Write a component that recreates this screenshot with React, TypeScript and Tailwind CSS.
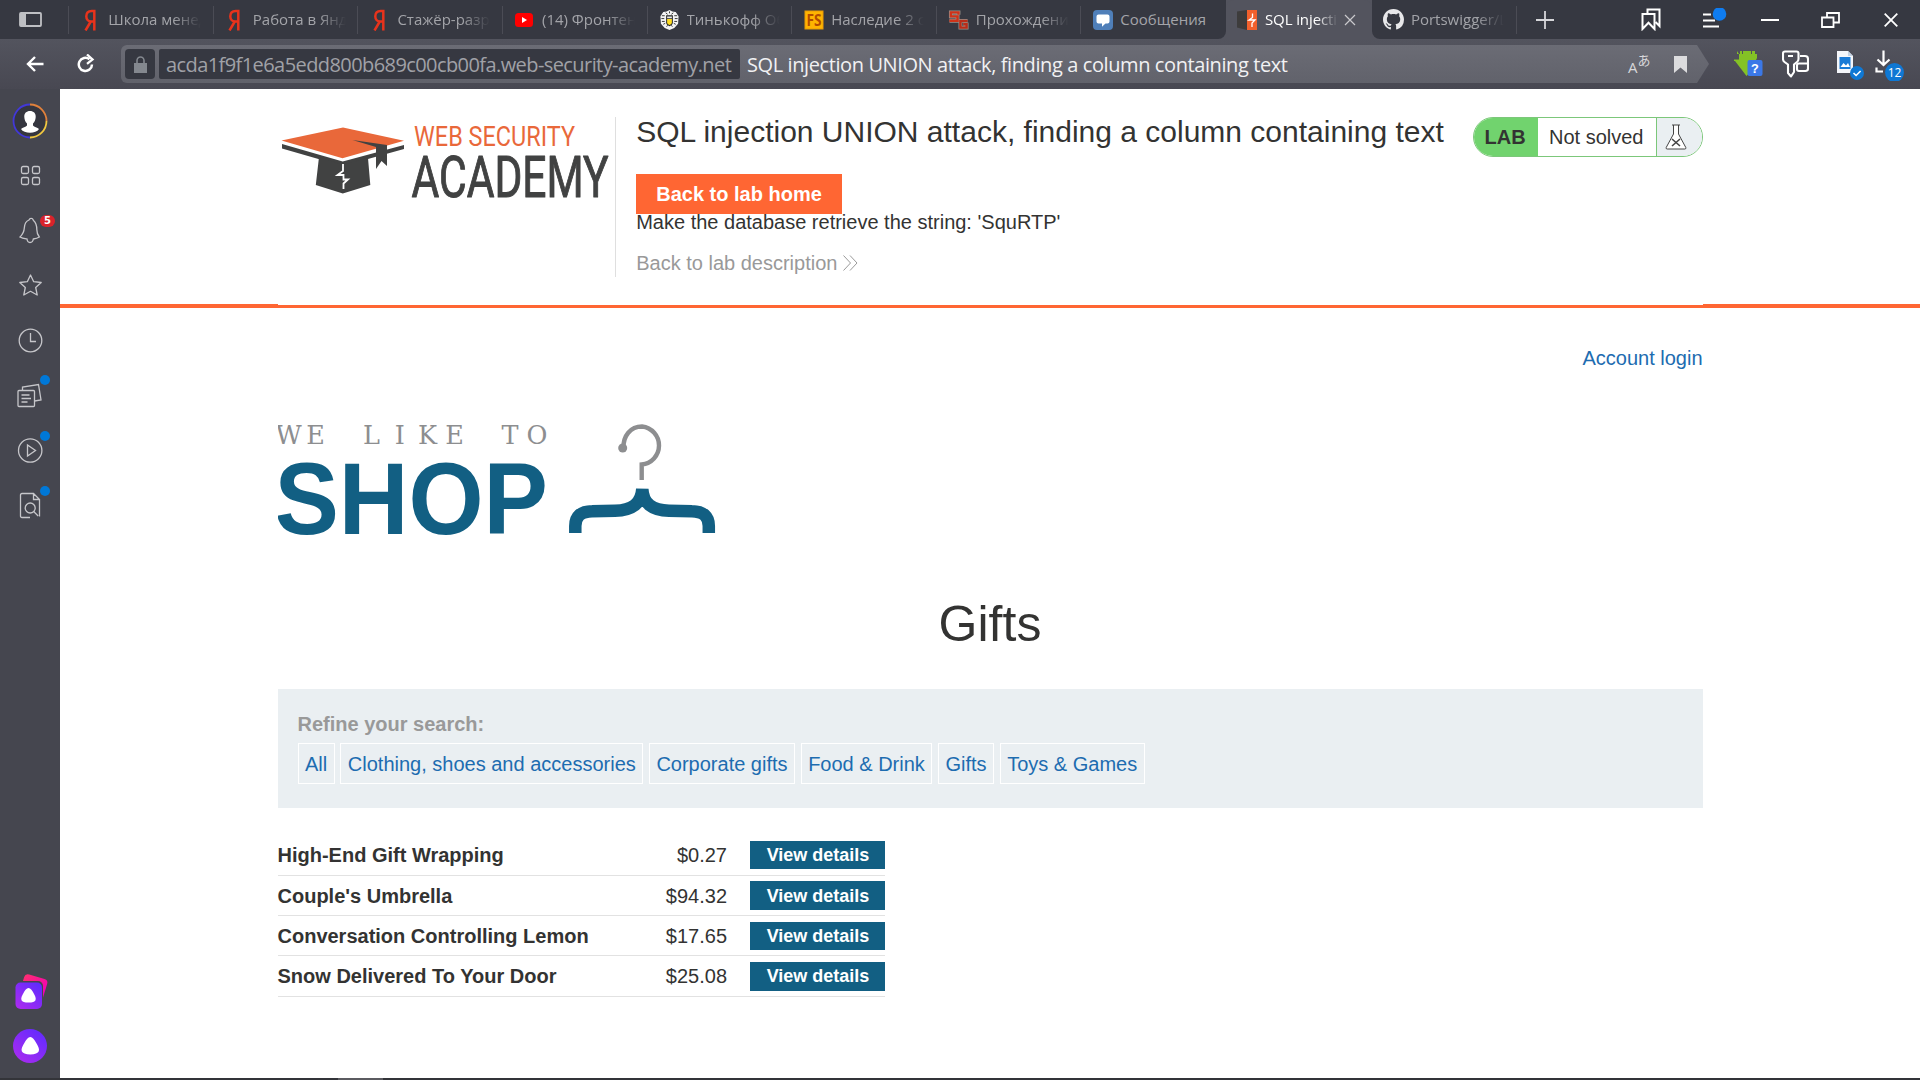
import type { ReactNode } from "react";

const UI = "font-['Open_Sans','Noto_Sans',sans-serif]";

function Ya() {
  return (
    <svg width="20" height="22" viewBox="0 0 20 22" fill="none" stroke="#e8331c" strokeWidth="2.5">
      <path d="M13.300 21.500V1.900h-2.6C7.200 1.900 5.300 4.100 5.300 7.200c0 3 1.800 5.200 4.800 5.200h3M10.100 12 4.500 21.500" />
    </svg>
  );
}

function YouTube() {
  return (
    <svg width="20" height="22" viewBox="0 0 20 22">
      <rect x="1" y="4" width="18" height="14" rx="3.500" fill="#f00" />
      <path d="M8 8v6l5-3z" fill="#fff" />
    </svg>
  );
}

function Crest() {
  return (
    <svg width="22" height="22" viewBox="0 0 22 22">
      <path d="M4.500 2.500 8 2l3-1.500L14 2l3.500.5 3 4.500-.5 8-4 4.500-5 2-5-2-4-4.500L1.500 7z" fill="#f4f4f4" />
      <path d="M3 6.500h3M2.500 9.500h3M3 12.500h3M4.500 15.500l2-1M19 6.500h-3M19.500 9.500h-3M19 12.500h-3M17.500 15.500l-2-1M7 3.500l2 1.500M15 3.500l-2 1.500M11 2v2M8 18l1-1.500M14 18l-1-1.500" stroke="#333" strokeWidth="1" />
      <path d="M7.500 6h7v8c0 1.600-1.500 2.600-3.500 3.500-2-.9-3.500-1.900-3.500-3.500z" fill="#222" />
      <path d="M8.500 10h5v3.500c0 1.200-1 2-2.500 2.700-1.500-.7-2.500-1.500-2.500-2.700z" fill="#fd2" />
      <path d="M8.500 7.300h5v1.900h-5z" fill="#e8e8e8" />
    </svg>
  );
}

function FS() {
  return (
    <svg width="20" height="22" viewBox="0 0 20 22">
      <rect x=".5" y="1.500" width="19" height="19" fill="#e89a06" />
      <rect x="1.500" y="2.500" width="17" height="17" fill="#ffb400" />
      <text x="10" y="16.500" textAnchor="middle" fontSize="15.500" fontWeight="700" textLength="15" lengthAdjust="spacingAndGlyphs" fill="#b34a00" fontFamily="Open Sans, sans-serif">FS</text>
    </svg>
  );
}

function SG() {
  return (
    <svg width="22" height="22" viewBox="0 0 22 22" fill="none">
      <path d="M11 5.500V3H3v4.200h7v4.600H1.500" stroke="#9a938c" strokeWidth="4" />
      <path d="M20.500 12h-7.500v7h6.500v-3.500h-3.500" stroke="#9a938c" strokeWidth="4" />
      <path d="M11 5.500V3H3v4.200h7v4.600H1.500" stroke="#cf3319" strokeWidth="2.500" />
      <path d="M20.500 12h-7.500v7h6.500v-3.500h-3.500" stroke="#b92c18" strokeWidth="2.500" />
    </svg>
  );
}

function Messages() {
  return (
    <svg width="20" height="22" viewBox="0 0 20 22">
      <rect x="0" y="1" width="20" height="20" rx="4" fill="#4f7fb9" />
      <path d="M5.500 5.500h9a2 2 0 0 1 2 2v5a2 2 0 0 1-2 2h-2L9 17.800v-3.300H5.500a2 2 0 0 1-2-2v-5a2 2 0 0 1 2-2z" fill="#fff" />
    </svg>
  );
}

function Burp() {
  return (
    <svg width="20" height="22" viewBox="0 0 20 22">
      <path d="M0 2.500 10 1v20L0 18.500z" fill="#3d3c3c" />
      <path d="M10 1h10v20H10z" fill="#f2602c" />
      <path d="M15.500 4.500v4L12 11h6l-3 3v4" stroke="#fff" strokeWidth="1.300" fill="none" />
    </svg>
  );
}

function GitHub() {
  return (
    <svg width="21" height="21" viewBox="0 0 16 16" fill="#e8e8ea">
      <path d="M8 0C3.580 0 0 3.580 0 8c0 3.540 2.290 6.530 5.470 7.590.4.070.550-.170.550-.380 0-.190-.010-.820-.010-1.490-2.010.370-2.530-.490-2.690-.940-.090-.230-.480-.940-.820-1.130-.280-.150-.680-.520-.010-.530.630-.010 1.080.580 1.230.820.720 1.210 1.870.870 2.330.660.070-.520.280-.870.510-1.070-1.780-.2-3.640-.890-3.640-3.950 0-.870.310-1.590.820-2.150-.080-.2-.360-1.020.080-2.120 0 0 .670-.210 2.200.820.640-.180 1.320-.270 2-.270s1.360.090 2 .270c1.530-1.040 2.200-.820 2.200-.820.440 1.100.160 1.920.080 2.120.510.560.820 1.270.820 2.150 0 3.070-1.870 3.750-3.650 3.950.290.250.540.730.540 1.480 0 1.070-.010 1.930-.010 2.200 0 .210.150.460.550.380A8.010 8.010 0 0 0 16 8c0-4.420-3.580-8-8-8z" />
    </svg>
  );
}

type TabData = { icon: ReactNode; title: string; active?: boolean; fit?: boolean };

const TABS: TabData[] = [
  { icon: <Ya />, title: "Школа менед" },
  { icon: <Ya />, title: "Работа в Янде" },
  { icon: <Ya />, title: "Стажёр-разра" },
  { icon: <YouTube />, title: "(14) Фронтен" },
  { icon: <Crest />, title: "Тинькофф Об" },
  { icon: <FS />, title: "Наследие 2 се" },
  { icon: <SG />, title: "Прохождени" },
  { icon: <Messages />, title: "Сообщения", fit: true },
  { icon: <Burp />, title: "SQL injectio", active: true },
  { icon: <GitHub />, title: "Portswigger/L" },
];

const FADE = "[mask-image:linear-gradient(to_right,#000_70%,transparent_100%)]";

function Tab({ t, last, beforeActive }: { t: TabData; last: boolean; beforeActive: boolean }) {
  if (t.active) {
    return (
      <div className="flex h-full w-[146px] items-center rounded-t-lg bg-[#53545e] pl-[11px]">
        <div className="flex w-[21px] justify-center">{t.icon}</div>
        <div className={`ml-[7px] w-[73px] overflow-hidden whitespace-nowrap text-[15px] tracking-[-0.1px] text-white ${FADE}`}>{t.title}</div>
        <svg className="ml-[6px]" width="12" height="12" viewBox="0 0 12 12" stroke="#c9c9cd" strokeWidth="1.200"><path d="M1 1l10 10M11 1 1 11" /></svg>
      </div>
    );
  }
  return (
    <div className={`flex h-full w-[144.600px] items-center bg-[#363841] ${beforeActive ? "rounded-br-lg" : ""} ${last ? "rounded-bl-lg" : ""}`}>
      <div className={`flex h-7 w-full items-center border-r pl-[11px] ${beforeActive ? "border-transparent" : "border-[#4b4c55]"}`}>
        <div className="flex w-[21px] justify-center">{t.icon}</div>
        <div className={`ml-[7px] w-[93px] overflow-hidden whitespace-nowrap text-[15px] text-[#a3a4a9] ${t.fit ? "" : FADE}`}>{t.title}</div>
      </div>
    </div>
  );
}

function TabBar() {
  return (
    <div className="flex h-[39px] items-center bg-[#53545e]">
      <div className="flex h-full w-[69.200px] items-center bg-[#363841]">
        <div className="flex h-7 w-full items-center border-r border-[#4b4c55] pl-[19px]">
          <svg width="23" height="15" viewBox="0 0 23 15"><rect x="1" y="1" width="21" height="13" rx="1" fill="none" stroke="#bfc0c4" strokeWidth="1.800" /><path d="M1 1h6v13H1z" fill="#bfc0c4" /></svg>
        </div>
      </div>
      {TABS.map((t, i) => (
        <Tab key={i} t={t} last={i === 9} beforeActive={i === 7} />
      ))}
      <div className="flex h-full flex-1 items-center bg-[#363841] text-white">
        <svg className="ml-[19px]" width="18" height="18" viewBox="0 0 18 18" stroke="#d6d6da" strokeWidth="1.800"><path d="M9 0v18M0 9h18" /></svg>
        <svg className="ml-[87px]" width="20" height="23" viewBox="0 0 20 23" fill="none" stroke="#fff" strokeWidth="2">
          <path d="M6.500 5V1.500h12V18l-4-4" /><path d="M1.500 6h12v15l-6-6.200-6 6.200z" />
        </svg>
        <svg className="ml-[40px]" width="26" height="24" viewBox="0 0 26 24" stroke="#fff" strokeWidth="2">
          <path d="M2 6.500h8M2 12.500h12M2 18.500h16" /><circle cx="18.500" cy="6" r="6.800" fill="#0f7cf0" stroke="none" />
        </svg>
        <svg className="ml-[34px]" width="18" height="20" viewBox="0 0 18 20" stroke="#fff" strokeWidth="2"><path d="M0 10h18" /></svg>
        <svg className="ml-[42px]" width="19" height="16" viewBox="0 0 19 16" fill="none" stroke="#fff" strokeWidth="1.800"><path d="M1 5.500h11.500V15H1zM6 5V1h12v9.500h-5" /></svg>
        <svg className="ml-[44px]" width="14" height="14" viewBox="0 0 14 14" stroke="#fff" strokeWidth="1.800"><path d="M.7.700l12.600 12.600M13.300.700.700 13.300" /></svg>
      </div>
    </div>
  );
}

function Toolbar() {
  return (
    <div className="flex h-[50px] items-center bg-linear-to-b from-[#53545e] to-[#484852]">
      <svg className="ml-[26px]" width="18" height="16" viewBox="0 0 18 16" fill="none" stroke="#fff" strokeWidth="2.400"><path d="M17.500 8H2M9 1 2 8l7 7" /></svg>
      <svg className="ml-[33px]" width="18" height="20" viewBox="0 0 18 20" fill="none" stroke="#fff" strokeWidth="2.500">
        <path d="M12.500 5.200A6.600 6.600 0 1 0 15 10.500" /><path d="M10 .5l5.500 5L10 9.800" strokeWidth="2.300" />
      </svg>
      <div className="ml-[26px] flex h-[38px] w-[1588px] items-center rounded-l-md bg-linear-to-b from-[#6b6c75] to-[#61626b] pl-1 [clip-path:polygon(0_0,calc(100%-12px)_0,100%_50%,calc(100%-12px)_100%,0_100%)]">
        <div className="flex h-[30px] w-[30px] items-center justify-center rounded-sm bg-[#363841]">
          <svg width="13" height="17" viewBox="0 0 13 17"><path d="M0 7h13v10H0z" fill="#84888f" /><path d="M3 8V4.500a3.500 3.500 0 0 1 7 0V8" fill="none" stroke="#84888f" strokeWidth="1.600" /></svg>
        </div>
        <div className="ml-1 flex h-[30px] w-[581px] items-center whitespace-nowrap rounded-[2px] bg-[#363841] pl-[7px] pt-[2px] text-[20px] tracking-[-0.580px] text-[#a0a1a7]">
          acda1f9f1e6a5edd800b689c00cb00fa.web-security-academy.net
        </div>
        <div className="ml-[7px] whitespace-nowrap pt-[2px] text-[20px] tracking-[-0.400px] text-[#f1f1f3]">SQL injection UNION attack, finding a column containing text</div>
        <div className="ml-auto mr-[22px] flex items-center">
          <div className="flex h-[22px] w-[23px] items-start text-[#d7d7da]">
            <span className="mt-[6px] text-[15px] leading-[16px]">A</span>
            <span className="-mt-px font-['Noto_Sans_CJK_JP',sans-serif] text-[13px] leading-[15px]">あ</span>
          </div>
          <svg className="ml-[23px]" width="13" height="17" viewBox="0 0 13 17"><path d="M0 0h13v17l-6.500-5.500L0 17z" fill="#dcdcde" /></svg>
        </div>
      </div>
      <svg className="ml-[25px]" width="29" height="26" viewBox="0 0 29 26">
        <path d="M3 0v3h3V0h2v3h1V0h8v3h1V0h3v3h2v4l-1 2v1h4L12.500 25 1 10H0V8.500h5V3z" fill="#84c225" />
        <rect x="13.500" y="9" width="15" height="16" rx="2" fill="#3b78e7" />
        <text x="21" y="21.500" textAnchor="middle" fontSize="13" fontWeight="700" fill="#fff" fontFamily="Liberation Mono, monospace">?</text>
      </svg>
      <svg className="ml-[19px]" width="27" height="28" viewBox="0 0 27 28" fill="none" stroke="#fff" strokeWidth="2.100" strokeLinejoin="round">
        <path d="M3 1.500h11.500q2 0 2 2V9q0 2-1.500 3l-3 2.500V22L9 26.500 6 23v-8.500L2.500 12Q1 11 1 9V3.500q0-2 2-2z" /><path d="M6 6h5M18 6h5q3 0 3 3v9.500q0 2.500-2.500 2.500H17q-2 0-2-2v-3.500q0-2 2-2h9" />
      </svg>
      <svg className="ml-[28px]" width="30" height="32" viewBox="0 0 30 32">
        <path d="M0 3h11l5 5v17H0z" fill="#f4f6fa" /><path d="M11 3v5h5" fill="#c5d3e4" /><rect x="2.500" y="9" width="11" height="12" fill="#1b7bd6" /><path d="M3.500 19l3-4 2.500 2.500L11 15l2 4z" fill="#fff" />
        <circle cx="20" cy="25" r="7" fill="#0f78d4" /><path d="M16.500 25l2.600 2.500 4.500-4.500" stroke="#fff" strokeWidth="1.600" fill="none" />
      </svg>
      <svg className="ml-[8px]" width="32" height="34" viewBox="0 0 32 34">
        <path d="M8.500 3.500v14M2.500 12.500l6 5.500 6-5.500M1.500 20.500v4H8" fill="none" stroke="#fff" strokeWidth="2.200" />
        <circle cx="19.500" cy="25.500" r="9.500" fill="#0f78d4" /><text x="19.500" y="30" textAnchor="middle" fontSize="12" fill="#fff" fontFamily="Open Sans, sans-serif">12</text>
      </svg>
    </div>
  );
}

function SideItem({ children, badge }: { children: ReactNode; badge?: "dot" | "count" }) {
  return (
    <div className="relative flex h-[55.100px] w-full shrink-0 items-center justify-center">
      <svg width="36" height="36" viewBox="0 0 36 36" fill="none" stroke="#c6c6ca" strokeWidth="1.300">{children}</svg>
      {badge === "dot" && <span className="absolute left-10 top-[7px] size-[10px] rounded-full bg-[#0078d7]" />}
      {badge === "count" && <span className="absolute left-10 top-[11.500px] flex h-3 w-[15px] items-center justify-center rounded-full bg-[#d9232b] font-['DejaVu_Sans',sans-serif] text-[10px] font-bold text-white">5</span>}
    </div>
  );
}

function Sidebar() {
  return (
    <aside className="flex w-[60px] flex-col items-center bg-[#45464f] pt-[4px]">
      <SideItem>
        <circle cx="18" cy="18" r="17" fill="#35363f" stroke="none" />
        <g strokeWidth="1.800"><path d="M18 1.500a16.500 16.500 0 0 0 0 33" stroke="#4238d8" /><path d="M18 1.500A16.500 16.500 0 0 1 34.500 18" stroke="#e0813c" /><path d="M34.500 18A16.500 16.500 0 0 1 18 34.500" stroke="#f1c840" /></g>
        <path d="M18 8c3.500 0 6 2.300 5.700 6-.2 3-1 5-2.700 6.500v2c1 1.500 4.500 2 6 3.500-3 5-15 5-18 0 1.500-1.500 5-2 6-3.500v-2c-1.700-1.500-2.500-3.500-2.700-6.500C12 10.300 14.500 8 18 8z" fill="#fff" stroke="none" />
      </SideItem>
      <SideItem><rect x="9.500" y="8.500" width="7" height="7" rx="1.500" /><rect x="20.500" y="8.500" width="7" height="7" rx="1.500" /><rect x="9.500" y="19.500" width="7" height="7" rx="1.500" /><rect x="20.500" y="19.500" width="7" height="7" rx="1.500" /></SideItem>
      <SideItem badge="count"><path d="M20 5.500c-1.500-.5-2.500.3-3 1.500-4 1.500-4.500 4.500-4.700 8-.2 4-1.300 6-4.300 9 2.500 1.500 5 1.700 7 2 .3 2.500 1.300 3.500 3 3.500s3-1 3.300-3.500c2-.3 4-.7 6-2-2-2.500-2.500-4-2.500-7.500 0-4-.5-6.500-3.300-9-.5-.5-.5-1.500-1.500-2z" /></SideItem>
      <SideItem><path d="M18.500 7l3.200 6.700 7.500.8-5.500 5 1.500 7.500-6.700-3.700-6.700 3.700 1.500-7.500-5.500-5 7.500-.8z" strokeLinejoin="round" /></SideItem>
      <SideItem><circle cx="18.500" cy="17.500" r="11.300" /><path d="M18.500 10v8.500H24" /></SideItem>
      <SideItem badge="dot"><rect x="6" y="12.500" width="16.500" height="16" rx="1" /><path d="M9.500 17h8M9.500 20.500h9.500M9.500 24h6M10.500 12V9l16-2.500L29 22l-6.500 1" /></SideItem>
      <SideItem badge="dot"><circle cx="18.200" cy="17.500" r="11.700" /><path d="M15.500 12v11l8-5.500z" /></SideItem>
      <SideItem badge="dot"><path d="M18 29.500H10q-1.500 0-1.500-1.500V7Q8.500 5.500 10 5.500h11.500l6 6v17M21.500 5.500v6h6" /><circle cx="18.200" cy="20" r="5" /><path d="M21.700 23.500l4.500 4.500" /></SideItem>
      <svg className="mt-auto" width="44" height="44" viewBox="0 0 44 44">
        <defs>
          <linearGradient id="vio" x1="1" y1="0" x2="0.200" y2="1"><stop offset="0" stopColor="#5a2bff" /><stop offset="1" stopColor="#a82bf0" /></linearGradient>
          <linearGradient id="pin" x1="0" y1="0" x2="1" y2="0.500"><stop offset="0" stopColor="#ff2f6e" /><stop offset="1" stopColor="#f500b4" /></linearGradient>
        </defs>
        <rect x="15" y="5" width="24" height="24" rx="4" fill="url(#pin)" transform="rotate(17 22 12)" />
        <rect x="6" y="11" width="29" height="29" rx="5" fill="#45464f" />
        <rect x="7.500" y="12.500" width="26.500" height="26.500" rx="5" fill="url(#vio)" />
        <path d="M20.500 18c2 0 3.500 2.300 5 5s2.800 5 2 7.200c-.7 1.700-3 2.300-7 2.300s-6.300-.6-7-2.300c-.8-2.200.5-4.500 2-7.200s3-5 5-5z" fill="#fff" />
      </svg>
      <svg className="mb-[14px] mt-[14px]" width="36" height="36" viewBox="0 0 36 36">
        <circle cx="18" cy="18" r="17" fill="url(#vio)" />
        <path d="M18.300 9c2.300 0 4 2.600 5.800 5.700s3.600 6 2.700 8.600c-.8 2-3.700 3.200-8.500 3.200s-7.700-1.200-8.500-3.200c-.9-2.600.9-5.500 2.700-8.600S16 9 18.300 9z" fill="#fff" />
      </svg>
    </aside>
  );
}

function AcademyLogo() {
  return (
    <svg width="337" height="100" viewBox="278 117 337 100">
      <path d="M281.500 140.500 343 127.500l61 13.200-61.500 17.500z" fill="#e9683a" />
      <path d="M282 144l60.700 17.500L404 145v4l-61.300 17L282 148.500z" fill="#414242" />
      <path d="M319 157l23.500 7.500L368 158l2.300 27-27.500 8.500-27-8.500z" fill="#414242" />
      <path d="M352.500 140l34.500 5v21l-5.500-5-5.500 8v-22z" fill="#414242" />
      <path d="M343 164v7l-5.500 4h6v4.500h4.500l-4.500 4v5.500" fill="none" stroke="#fff" strokeWidth="1.800" />
      <text x="414" y="146" fontFamily="Roboto, sans-serif" fontSize="28" textLength="161" lengthAdjust="spacingAndGlyphs" fill="#e9683a">WEB SECURITY</text>
      <text x="411.500" y="196.500" fontFamily="Roboto, sans-serif" fontSize="57" textLength="197" lengthAdjust="spacingAndGlyphs" fill="#414242" stroke="#414242" strokeWidth="1" strokeLinejoin="round">ACADEMY</text>
    </svg>
  );
}

function ShopLogo() {
  return (
    <svg width="440" height="120" viewBox="278 420 440 120">
      <text y="444" x="288.500 315.500 371.500 399.700 427.500 454.500 510 537" textAnchor="middle" fontFamily="DejaVu Serif, serif" fontSize="25.500" fill="#8d8e90">WELIKETO</text>
      <text x="274.500" y="533.500" fontFamily="Liberation Sans, sans-serif" fontWeight="700" fontSize="102" textLength="273.500" lengthAdjust="spacingAndGlyphs" fill="#125f83">SHOP</text>
      <circle cx="622.700" cy="448" r="4.500" fill="#8d8e90" />
      <path d="M623.500 448C623 436 630.500 426.500 642 426.500A19.100 19.100 0 0 1 641.700 464.500V480" fill="none" stroke="#8d8e90" strokeWidth="4.400" />
      <path d="M575.300 533V526Q575.300 511.500 592 511.200L615 510.700Q641 510.500 642.300 489Q643.500 510.500 669 510.700L692 511.200Q708.800 511.500 708.800 526V533" fill="none" stroke="#125f83" strokeWidth="12.500" strokeLinejoin="bevel" />
    </svg>
  );
}

function LabStatus() {
  return (
    <div className="mt-[28px] flex h-10 w-[230px] overflow-hidden rounded-full border border-[#7cc77a] bg-white text-[20px] leading-[38px]">
      <div className="w-[64px] bg-[#71d36e] pl-[11px] font-bold">LAB</div>
      <div className="w-[119px] whitespace-nowrap border-r border-[#7cc77a] pl-[11.500px]">Not solved</div>
      <div className="flex flex-1 items-center bg-[#eaeff2] pl-[8px]">
        <svg width="22" height="26" viewBox="0 0 22 26" fill="none" stroke="#444" strokeWidth="1"><path d="M7 1h8M8.500 1v9L1.200 23.500q-.5 1.500 1 1.500h17.600q1.500 0 1-1.500L13.500 10V1" fill="#fff" /><path d="M7 15l8 7M15 15l-8 7" strokeWidth="1.600" /></svg>
      </div>
    </div>
  );
}

function LabHeader() {
  return (
    <header className="flex h-[219px] justify-center border-b-[3px] border-[#ff6633] bg-white">
      <div className="h-[216px] flex-1 border-b border-[#ff6633]" />
      <div className="flex w-[1425px]">
        <div className="mt-[28px] h-[160px] w-[338px] border-r border-[#dfdfdf]"><AcademyLogo /></div>
        <div className="flex flex-1 flex-col items-start whitespace-nowrap pl-5">
          <h2 className="mt-[25px] pl-[0.700px] text-[30px] leading-[36px]">SQL injection UNION attack, finding a column containing text</h2>
          <a className="mt-[24px] flex h-10 w-[206px] items-center justify-center bg-[#ff6633] pl-px text-[20px] font-bold text-white">Back to lab home</a>
          <p className="-mt-[4px] pl-[0.700px] text-[20px] leading-[24px] [clip-path:inset(4px_0_0_0)]">Make the database retrieve the string: 'SquRTP'</p>
          <a className="mt-[17px] flex items-center pl-[0.700px] text-[20px] leading-[24px] text-[#999]">
            Back to lab description
            <svg className="ml-[6px]" width="15" height="16" viewBox="0 0 15 16" fill="none" stroke="#999" strokeWidth="1"><path d="M.5.500 7.500 8l-7 7.500M7 .5 14 8l-7 7.500" /></svg>
          </a>
        </div>
        <LabStatus />
      </div>
      <div className="h-[216px] flex-1 border-b border-[#ff6633]" />
    </header>
  );
}

const FILTERS = ["All", "Clothing, shoes and accessories", "Corporate gifts", "Food & Drink", "Gifts", "Toys & Games"];

const PRODUCTS = [
  ["High-End Gift Wrapping", "$0.27"],
  ["Couple's Umbrella", "$94.32"],
  ["Conversation Controlling Lemon", "$17.65"],
  ["Snow Delivered To Your Door", "$25.08"],
];

function Shop() {
  return (
    <section className="mx-auto flex w-[1425px] flex-col text-[20px]">
      <a className="mt-[38px] self-end leading-6 text-[#1d6cb0]">Account login</a>
      <div className="mt-[50px] h-[120px]"><ShopLogo /></div>
      <h1 className="mt-[54px] text-center text-[50px] leading-[60px]">Gifts</h1>
      <div className="mt-[35px] h-[119px] bg-[#eaeff2] px-5 pt-[23px]">
        <div className="font-bold leading-6 text-[#999]">Refine your search:</div>
        <div className="mt-[7px] flex gap-[5.600px]">
          {FILTERS.map((f) => (
            <a key={f} className="flex h-[41px] items-center whitespace-nowrap border border-white px-[6.500px] text-[#1d6cb0]">{f}</a>
          ))}
        </div>
      </div>
      <div className="mt-[27.300px] w-[607px]">
        {PRODUCTS.map(([name, price]) => (
          <div key={name} className="flex h-[40.400px] items-center border-b border-[#e2e2e2] pt-[0.500px]">
            <span className="font-bold">{name}</span>
            <span className="ml-auto">{price}</span>
            <a className="ml-[22.500px] flex h-[28.500px] w-[135px] items-center justify-center bg-[#125f83] pl-[2px] pt-px text-[18px] font-bold text-white">View details</a>
          </div>
        ))}
      </div>
    </section>
  );
}

export default function App() {
  return (
    <div className={`flex h-[1080px] w-[1920px] flex-col overflow-hidden bg-[#333439] ${UI}`}>
      <TabBar />
      <Toolbar />
      <div className="flex h-[989px]">
        <Sidebar />
        <main className="flex-1 bg-white font-['Liberation_Sans',Arial,sans-serif] text-[#333332]">
          <LabHeader />
          <Shop />
        </main>
      </div>
      <div className="ml-[338px] h-[2px] w-[45px] bg-[#5b5b60]" />
    </div>
  );
}
